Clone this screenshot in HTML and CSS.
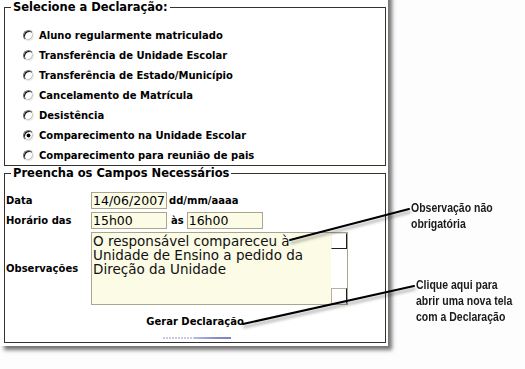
FILE: index.html
```html
<!DOCTYPE html>
<html lang="pt-BR">
<head>
<meta charset="utf-8">
<title>Declaração</title>
<link rel="stylesheet" href="styles.css">
</head>
<body>
<div class="page">
  <fieldset class="box box-decl">
    <legend>Selecione a Declaração:</legend>
    <div class="opts">
      <label class="opt"><input type="radio" name="decl">Aluno regularmente matriculado</label>
      <label class="opt"><input type="radio" name="decl">Transferência de Unidade Escolar</label>
      <label class="opt"><input type="radio" name="decl">Transferência de Estado/Município</label>
      <label class="opt"><input type="radio" name="decl">Cancelamento de Matrícula</label>
      <label class="opt"><input type="radio" name="decl">Desistência</label>
      <label class="opt"><input type="radio" name="decl" checked>Comparecimento na Unidade Escolar</label>
      <label class="opt"><input type="radio" name="decl">Comparecimento para reunião de pais</label>
    </div>
  </fieldset>
  <fieldset class="box box-campos">
    <legend>Preencha os Campos Necessários</legend>
    <div class="form-grid">
      <span class="lbl">Data</span>
      <div class="field"><input class="txt" type="text" value="14/06/2007"><span class="hint hint-fmt">dd/mm/aaaa</span></div>
      <span class="lbl">Horário das</span>
      <div class="field"><input class="txt" type="text" value="15h00"><span class="hint hint-as">às</span><input class="txt" type="text" value="16h00"></div>
      <span class="lbl">Observações</span>
      <div class="field">
        <div class="obs-box">
          <textarea class="obs">O responsável compareceu à Unidade de Ensino a pedido da Direção da Unidade</textarea>
          <div class="vscroll"><span class="sb-btn sb-up"></span><span class="sb-btn sb-down"></span></div>
        </div>
      </div>
    </div>
    <div class="actions">
      <a class="btn" href="#">Gerar Declaração</a>
      <span class="btn-bar"></span>
    </div>
  </fieldset>
</div>

<div class="note note-obs">Observação não<br>obrigatória</div>
<div class="note note-gerar">Clique aqui para<br>abrir uma nova tela<br>com a Declaração</div>

<svg class="pointers" width="525" height="369" viewBox="0 0 525 369" aria-hidden="true">
  <line x1="290" y1="240" x2="409" y2="209"/>
  <line x1="243" y1="324" x2="414" y2="286"/>
</svg>
</body>
</html>
```

FILE: styles.css
```css
html, body {
  margin: 0;
  padding: 0;
}
body {
  background: #fcfdfc;
  width: 525px;
  height: 369px;
  overflow: hidden;
  position: relative;
  font-family: "DejaVu Sans", Verdana, sans-serif;
  color: #000;
}

.page {
  box-sizing: border-box;
  width: 388px;
  margin-top: -10px;
  padding: 10px 2px 3px 4px;
  background: #fff;
  box-shadow: 4px 4px 4px rgba(0, 0, 0, 0.55);
}

.box {
  margin: 0;
  border: 1px solid #35322a;
  min-width: 0;
}
.box legend {
  margin-left: 6px;
  padding: 0 2px;
  font-weight: bold;
  font-size: 11.5px;
  line-height: 14px;
}

.box-decl {
  padding: 11px 0 0 0;
}
.opts {
  display: flex;
  flex-direction: column;
  padding-left: 18px;
}
.opt {
  display: flex;
  align-items: center;
  height: 20px;
  font-weight: bold;
  font-size: 10px;
  white-space: nowrap;
}
.opt input {
  -webkit-appearance: none;
  appearance: none;
  box-sizing: border-box;
  width: 11px;
  height: 11px;
  margin: 0 5px 0 0;
  border-radius: 50%;
  border: 1px solid;
  border-color: #6f6f6f #ecebe6 #ecebe6 #6f6f6f;
  box-shadow: inset 1px 1px 0 #111, inset -1px -1px 0 #c9c5b9;
  background: #fff;
}
.opt input:checked {
  background: radial-gradient(circle, #000 0, #000 1.6px, #fff 2.3px);
}

.box-campos {
  padding: 12px 0 3px 0;
}
.form-grid {
  display: grid;
  grid-template-columns: 85px auto;
  row-gap: 3px;
  padding-left: 1px;
}
.lbl {
  align-self: center;
  font-weight: bold;
  font-size: 10px;
  white-space: nowrap;
}
.field {
  display: flex;
  align-items: center;
}
.txt {
  box-sizing: border-box;
  width: 76px;
  height: 17px;
  margin: 0;
  padding: 0 1px;
  border: 1px solid #aaa58f;
  background: #fbfbe6;
  font-family: "DejaVu Sans", Verdana, sans-serif;
  font-size: 12.5px;
  color: #000;
}
.hint {
  font-weight: bold;
  font-size: 10px;
}
.hint-fmt {
  margin-left: 2px;
}
.hint-as {
  margin: 0 3px 0 4px;
}

.obs-box {
  display: flex;
  box-sizing: border-box;
  width: 257px;
  height: 73px;
  border: 1px solid #aaa58f;
  background: #fbfbe6;
}
.obs {
  flex: 1;
  min-width: 0;
  margin: 0;
  padding: 1px 4px 0 1px;
  border: 0;
  background: transparent;
  font-family: "DejaVu Sans", Verdana, sans-serif;
  font-size: 13.5px;
  line-height: 14px;
  color: #111;
  resize: none;
  overflow: hidden;
  outline: none;
}
.vscroll {
  display: flex;
  flex-direction: column;
  justify-content: space-between;
  width: 16px;
  background: #fff;
}
.sb-btn {
  display: block;
  box-sizing: border-box;
  height: 16px;
  background: #fff;
  border: 1px solid;
}
.sb-up {
  border-color: #e4e1d8 #1e1e1e #1e1e1e #f4f2ec;
}
.sb-down {
  border-color: #b5b19f #1e1e1e #f4f2ec #b5b19f;
}

.actions {
  display: flex;
  flex-direction: column;
  align-items: center;
}
.btn {
  margin-top: 11px;
  font-weight: bold;
  font-size: 10px;
  line-height: 12px;
  color: #000;
  text-decoration: none;
}
.btn-bar {
  display: block;
  width: 68px;
  height: 2px;
  margin: 9px 0 0 4px;
  background-image:
    linear-gradient(to right, transparent 0, transparent 45%, #b8bce4 45%, #8a8ed0 75%, #7b7fc6 100%),
    repeating-linear-gradient(to right, #c6cae9 0, #c6cae9 2px, #fff 2px, #fff 3px);
}

.note {
  position: absolute;
  font-family: "Liberation Sans", Arial, sans-serif;
  font-weight: bold;
  font-size: 12.5px;
  line-height: 16px;
  color: #1a1a1a;
  white-space: nowrap;
  transform: scaleX(0.84);
  transform-origin: left top;
}
.note-obs {
  left: 411px;
  top: 200px;
}
.note-gerar {
  left: 416px;
  top: 277px;
}

.pointers {
  position: absolute;
  left: 0;
  top: 0;
  pointer-events: none;
  overflow: visible;
}
.pointers line {
  stroke: #000;
  stroke-width: 2;
  stroke-linecap: round;
  filter: drop-shadow(1px 3px 1.5px rgba(0, 0, 0, 0.35));
}
```
